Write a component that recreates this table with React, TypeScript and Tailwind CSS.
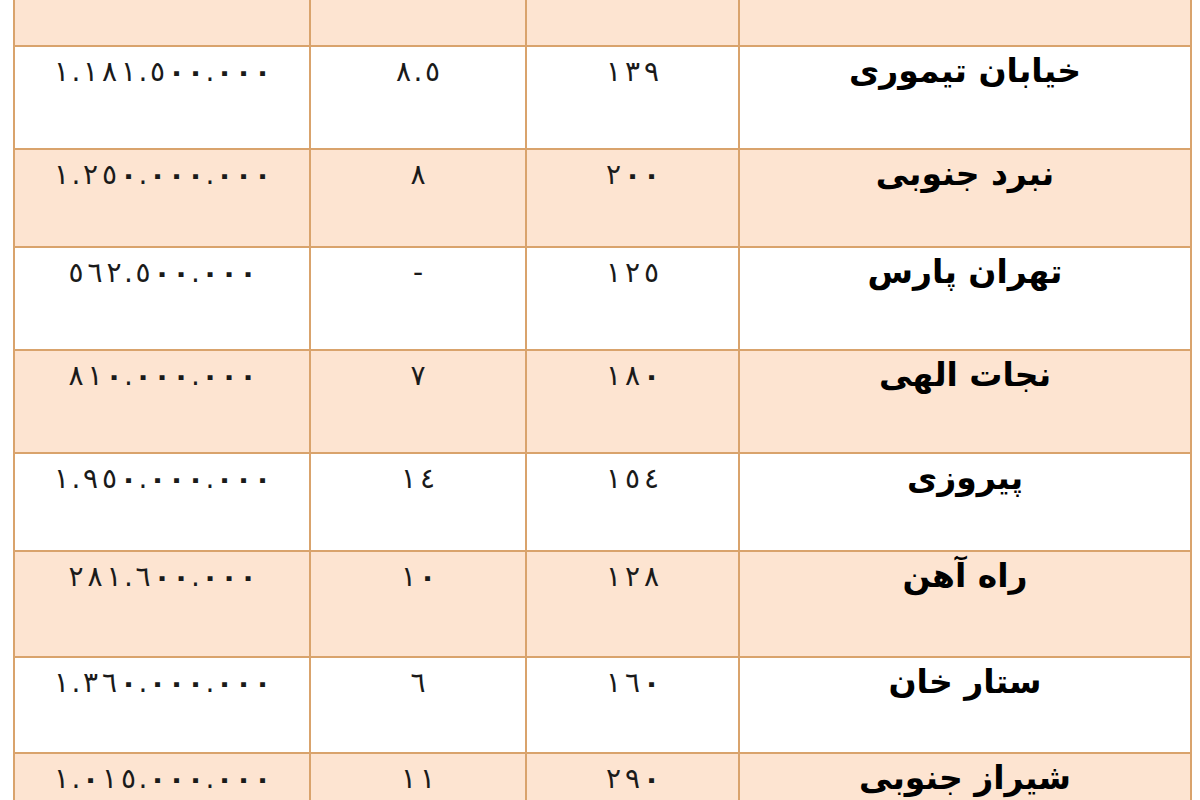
import React from 'react';

const fa = (s: string) => s.replace(/[0-9]/g, (d) => String.fromCharCode(0x0660 + Number(d)));

type Row = { amount: string; pct: string; area: string; name: string; h: string };

const rows: Row[] = [
  { amount: '1.181.500.000', pct: '8.5', area: '139', name: 'خیابان تیموری', h: 'h-[103px]' },
  { amount: '1.250.000.000', pct: '8', area: '200', name: 'نبرد جنوبی', h: 'h-[98px]' },
  { amount: '562.500.000', pct: '-', area: '125', name: 'تهران پارس', h: 'h-[103px]' },
  { amount: '810.000.000', pct: '7', area: '180', name: 'نجات الهی', h: 'h-[103px]' },
  { amount: '1.950.000.000', pct: '14', area: '154', name: 'پیروزی', h: 'h-[98px]' },
  { amount: '281.600.000', pct: '10', area: '128', name: 'راه آهن', h: 'h-[106px]' },
  { amount: '1.360.000.000', pct: '6', area: '160', name: 'ستار خان', h: 'h-[96px]' },
  { amount: '1.015.000.000', pct: '11', area: '290', name: 'شیراز جنوبی', h: 'h-[96px]' },
];

const cell = 'border-2 border-[#d9a36c] align-top text-center';

// digits are spaced wide in the source, so each one gets its own slot
function Num({ value }: { value: string }) {
  return (
    <div dir="ltr" className="pt-[9px] flex justify-center text-[28px] leading-[32px] text-[#1a1a1a]">
      {fa(value).split('').map((ch, i) => (
        <span
          key={i}
          className={
            ch === '.' ? 'w-[10px] text-center' : ch === '٠' ? 'w-[19px] text-center font-bold' : 'w-[19px] text-center'
          }
        >
          {ch}
        </span>
      ))}
    </div>
  );
}

export default function App() {
  return (
    <div className="w-[1200px] h-[800px] overflow-hidden bg-white font-['DejaVu_Sans',sans-serif]">
      <table className="ml-[13px] w-[1177px] border-collapse table-fixed">
        <colgroup>
          <col className="w-[296px]" />
          <col className="w-[216px]" />
          <col className="w-[213px]" />
          <col className="w-[452px]" />
        </colgroup>
        <tbody>
          <tr className="h-[46px] bg-[#fde4d1]">
            <td className={`${cell} border-t-0`} />
            <td className={`${cell} border-t-0`} />
            <td className={`${cell} border-t-0`} />
            <td className={`${cell} border-t-0`} />
          </tr>
          {rows.map((r, i) => (
            <tr key={r.name} className={`${r.h} ${i % 2 === 0 ? 'bg-white' : 'bg-[#fde4d1]'}`}>
              <td className={cell}>
                <Num value={r.amount} />
              </td>
              <td className={cell}>
                <Num value={r.pct} />
              </td>
              <td className={cell}>
                <Num value={r.area} />
              </td>
              <td className={cell}>
                <div dir="rtl" className="pt-[5px] text-[33px] leading-[38px] font-bold text-black">
                  {r.name}
                </div>
              </td>
            </tr>
          ))}
        </tbody>
      </table>
    </div>
  );
}
